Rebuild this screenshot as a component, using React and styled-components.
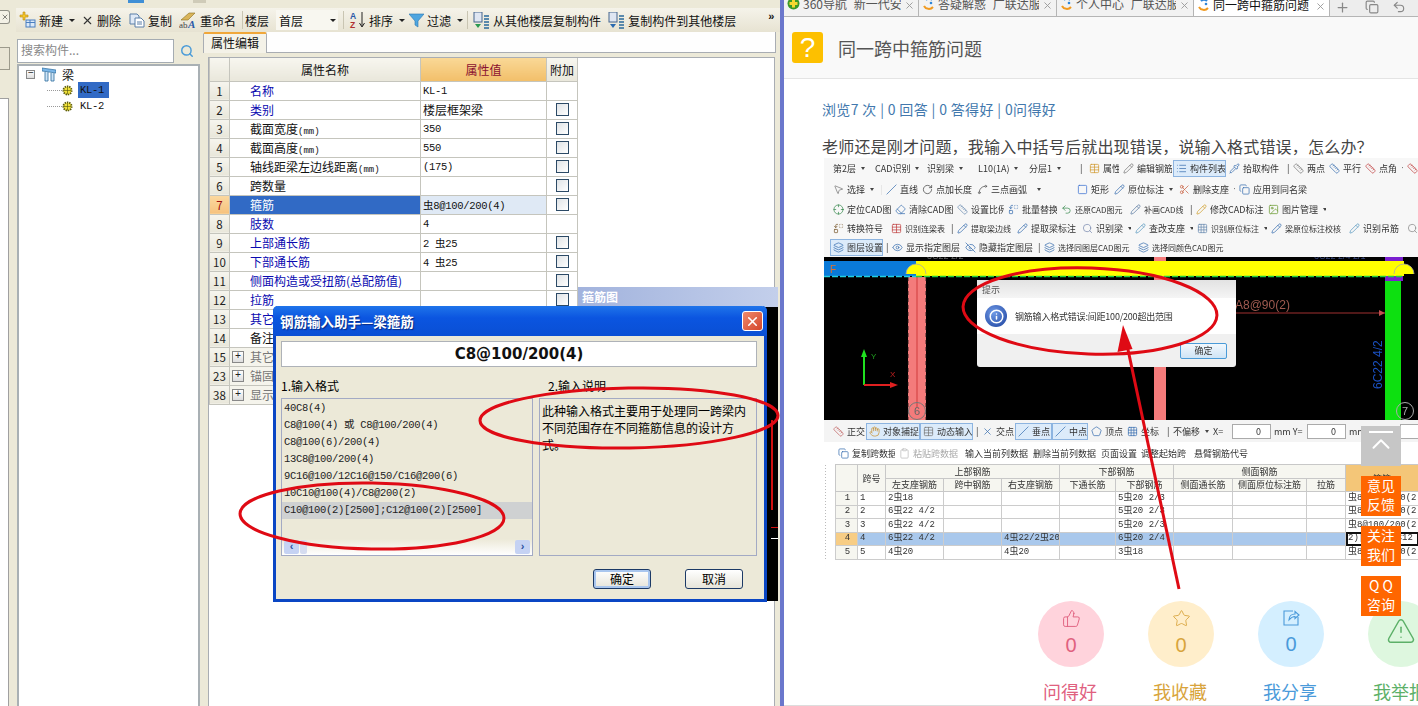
import styled, { createGlobalStyle } from 'styled-components';
import {
  ThumbsUp, Star, TriangleAlert, Search, X, Plus, Copy, Undo2, MousePointer2, Slash, RotateCw, Spline,
  Square, Pencil, Scissors, Layers, Eye, EyeOff, Table, List, Pipette, Image, Crosshair, Ruler,
  Grid3x3, Pentagon, Hand, Clipboard, Replace, Eraser, ChevronUp, Info,
} from 'lucide-react';

const Global = createGlobalStyle`
  html, body { margin: 0; padding: 0; background: #fff; }
  * { box-sizing: border-box; }
  body { font-family: "Noto Sans CJK SC", "Liberation Sans", sans-serif; }
`;

const mono = '"Liberation Mono", "Noto Sans CJK SC", monospace';
const cjk = '"Noto Sans CJK SC", "Liberation Sans", sans-serif';

const Page = styled.div`
  position: relative;
  display: flex;
  width: 1418px;
  height: 706px;
  overflow: hidden;
`;

/* left: desktop application */
const AppWindow = styled.div`
  display: flex;
  flex-direction: column;
  width: 780px;
  background: #ece9d8;
  font-size: 12px;
  color: #111;
`;

const AppTop = styled.div`
  height: 8px;
  flex: none;
  display: flex;
  align-items: flex-start;
`;

const TopBit = styled.span`
  width: ${(p) => p.$w}px;
  height: 3px;
  margin-left: ${(p) => p.$ml}px;
  background: ${(p) => p.$bg};
`;

const AppBody = styled.div`
  flex: 1;
  display: flex;
  min-height: 0;
`;

const Gutter = styled.div`
  width: 16px;
  flex: none;
  display: flex;
  flex-direction: column;
  align-items: flex-start;
`;

const GutterClose = styled.div`
  width: 10px;
  height: 14px;
  margin-top: 2px;
  border: 1px solid #8f8f86;
  border-left: 0;
  border-radius: 0 3px 3px 0;
  background: #f3f1e6;
  display: flex;
  align-items: center;
  justify-content: center;
`;

const GutterTab = styled.div`
  width: 10px;
  height: 23px;
  margin-top: 23px;
  border: 1px solid #9c9a8c;
  border-left: 0;
  background: #e9e5d5;
`;

const GutterPane = styled.div`
  width: 9px;
  flex: 1;
  margin-top: 28px;
  background: #fff;
  border-top: 1px solid #a0a0a0;
  border-right: 1px solid #a0a0a0;
`;

const AppMain = styled.div`
  flex: 1;
  display: flex;
  flex-direction: column;
  min-width: 0;
`;

const ToolStrip = styled.div`
  height: 24px;
  flex: none;
  display: flex;
  align-items: center;
  background: linear-gradient(#f5f3ea, #e7e3d2);
  position: relative;
`;

const StripItem = styled.div`
  display: flex;
  align-items: center;
  gap: 3px;
  margin-left: ${(p) => p.$ml || 0}px;
  white-space: nowrap;
`;

const Caret = styled.span`
  width: 0;
  height: 0;
  margin-left: 3px;
  border-left: 3px solid transparent;
  border-right: 3px solid transparent;
  border-top: 3px solid #222;
`;

const StripSep = styled.span`
  width: 1px;
  height: 18px;
  background: #c9c5b2;
  margin-left: ${(p) => p.$ml || 0}px;
`;

const FloorSelect = styled.div`
  width: 62px;
  height: 20px;
  margin-left: 7px;
  padding: 0 2px 0 3px;
  background: #f8f7f0;
  display: flex;
  align-items: center;
  justify-content: space-between;
`;

const More = styled.span`
  margin-left: 32px;
  font: 700 11px "Liberation Sans", sans-serif;
  transform: translateY(-4px);
`;

const Panes = styled.div`
  flex: 1;
  display: flex;
  min-height: 0;
`;

const TreeCol = styled.div`
  width: 184px;
  flex: none;
  padding: 7px 0 0 1px;
  display: flex;
  flex-direction: column;
`;

const SearchRow = styled.div`
  display: flex;
  height: 24px;
  flex: none;
`;

const SearchInput = styled.div`
  width: 157px;
  background: #fff;
  border: 1px solid #a5acb2;
  color: #888;
  padding-left: 3px;
  line-height: 20px;
`;

const SearchBtn = styled.div`
  flex: 1;
  display: flex;
  align-items: center;
  justify-content: center;
  color: #4a9bd8;
`;

const TreeBox = styled.div`
  flex: 1;
  margin-top: 1px;
  background: #fff;
  border: 2px solid #a9b0b4;
  border-bottom: 0;
  padding: 0 0 0 7px;
`;

const TreeRoot = styled.div`
  display: flex;
  align-items: center;
  height: 16px;
`;

const RootName = styled.span`
  margin-left: 6px;
`;

const Expander = styled.span`
  width: ${(p) => p.$size || 9}px;
  height: ${(p) => p.$size || 9}px;
  margin-right: ${(p) => p.$mr || 0}px;
  border: 1px solid #888;
  background: linear-gradient(#fff, #ddd);
  display: inline-flex;
  align-items: center;
  justify-content: center;
  font: 10px/1 "Liberation Mono", monospace;
  color: #222;
  flex: none;
`;

const TreeLeaf = styled.div`
  display: flex;
  align-items: center;
  height: 16px;
  margin-left: 21px;
`;

const LeafDots = styled.span`
  width: 15px;
  border-top: 1px dotted #999;
`;

const LeafName = styled.span`
  margin-left: 5px;
  height: 16px;
  width: 31px;
  padding-left: 2px;
  font: 10.5px/16px ${mono};
  letter-spacing: -0.3px;
  background: ${(p) => (p.$on ? '#316ac5' : 'transparent')};
  color: #111;
`;

const PropPanel = styled.div`
  flex: 1;
  margin-left: 3px;
  min-width: 0;
  display: flex;
  flex-direction: column;
  margin-right: 4px;
`;

const TabBar = styled.div`
  height: 21px;
  flex: none;
  background: #fefefe;
  border-bottom: 1px solid #a9adb3;
  border-right: 1px solid #a9adb3;
`;

const PropTab = styled.div`
  width: 64px;
  height: 21px;
  background: #f4f2e8;
  border: 1px solid #a9adb3;
  border-top: 2px solid #f0a73a;
  border-bottom: 0;
  border-radius: 2px 2px 0 0;
  text-align: center;
  line-height: 18px;
`;

const TableBox = styled.div`
  flex: 1;
  margin: 4px 1px 0 5px;
  background: #fff;
  border: 1px solid #a9adb3;
  border-bottom: 0;
`;

const PropTable = styled.table`
  border-collapse: collapse;
  table-layout: fixed;
  width: 368px;
`;

const HeadCell = styled.th`
  height: 23px;
  padding: 0;
  font-weight: 400;
  border: 1px solid #c5c5bd;
  border-top: 0;
  background: ${(p) => (p.$hot ? 'linear-gradient(#f9d896, #f2bf6a)' : 'linear-gradient(#f7f6ef, #e9e7db)')};
  color: ${(p) => (p.$hot ? '#8a1030' : '#111')};
`;

const Num = styled.td`
  height: 19px;
  padding: 0;
  text-align: center;
  font: 11.5px ${cjk};
  border: 1px solid #c5c5bd;
  background: ${(p) => (p.$on ? 'linear-gradient(#fbd8a0, #f6c27e)' : 'linear-gradient(#f6f5ee, #e8e6da)')};
  color: ${(p) => (p.$on ? '#a01010' : '#222')};
`;

const Name = styled.td`
  padding: 0 0 0 20px;
  white-space: nowrap;
  overflow: hidden;
  border: 1px solid #c5c5bd;
  background: ${(p) => (p.$on ? '#316ac5' : p.$group ? '#f5f4ec' : '#fff')};
  color: ${(p) => (p.$on ? '#fff' : p.$tone === 'blue' ? '#0a0ab0' : p.$tone === 'gray' ? '#777' : '#111')};
`;

const Unit = styled.span`
  font: 9px ${mono};
`;

const GroupName = styled.div`
  display: flex;
  align-items: center;
  margin-left: -18px;
`;

const Val = styled.td`
  padding: 0 0 0 2px;
  font: 10.5px ${mono};
  letter-spacing: -0.3px;
  white-space: pre;
  border: 1px solid #c5c5bd;
  background: ${(p) => (p.$on ? '#dfe9f5' : '#fff')};
`;

const ValCjk = styled.span`
  font: 12px ${cjk};
  letter-spacing: 0;
`;

const Extra = styled.td`
  padding: 0;
  text-align: center;
  border: 1px solid #c5c5bd;
`;

const Check = styled.span`
  display: inline-block;
  width: 13px;
  height: 13px;
  margin-top: 2px;
  border: 1px solid #2c4a66;
  background: linear-gradient(135deg, #dfe3e6, #fff);
`;

const AppEdge = styled.div`
  width: 4px;
  flex: none;
  background: #6b77cc;
`;

/* floating windows on top of the application */
const RebarWindow = styled.div`
  position: absolute;
  left: 578px;
  top: 287px;
  width: 200px;
  height: 314px;
  background: #000;
  overflow: hidden;
`;

const RebarTitle = styled.div`
  height: 20px;
  padding-left: 4px;
  background: linear-gradient(90deg, #a2b3dd, #c3cfeb);
  color: #fff;
  font-size: 12px;
  font-weight: 700;
  line-height: 20px;
`;

const RebarRed = styled.div`
  position: absolute;
  left: 193px;
  top: 133px;
  width: 2px;
  height: 90px;
  background: #d01010;
`;

const RebarLine = styled.div`
  position: absolute;
  left: 193px;
  top: ${(p) => p.$top}px;
  width: 7px;
  height: 1px;
  background: ${(p) => p.$color};
`;

const Dialog = styled.div`
  position: absolute;
  left: 273px;
  top: 306px;
  width: 494px;
  height: 296px;
  display: flex;
  flex-direction: column;
  background: #ece9d8;
  border: 3px solid #0a46c4;
  border-top: 0;
  border-radius: 5px 5px 0 0;
  font-size: 12px;
`;

const DialogTitle = styled.div`
  height: 30px;
  margin: 0 -3px;
  flex: none;
  padding: 0 4px 0 7px;
  display: flex;
  align-items: center;
  justify-content: space-between;
  border-radius: 5px 5px 0 0;
  background: linear-gradient(#1f74ea, #0b55e0 40%, #0a4fd4);
  color: #fff;
  font-size: 13.5px;
  font-weight: 700;
  text-shadow: 1px 1px 1px #0a2a80;
`;

const CloseBtn = styled.div`
  width: 21px;
  height: 20px;
  border: 1px solid #fff;
  border-radius: 3px;
  background: linear-gradient(135deg, #ee8a6c, #d4452a);
  display: flex;
  align-items: center;
  justify-content: center;
  color: #fff;
`;

const Formula = styled.div`
  height: 26px;
  margin: 5px 7px 0 5px;
  flex: none;
  background: #fff;
  border: 1px solid #aeb2b8;
  text-align: center;
  font: 700 15px/24px "DejaVu Sans", sans-serif;
  color: #111;
`;

const ColLabels = styled.div`
  display: flex;
  margin: 11px 0 0 5px;
  height: 20px;
  flex: none;
  line-height: 16px;
`;

const ColLabel = styled.div`
  width: ${(p) => p.$w}px;
`;

const DialogCols = styled.div`
  display: flex;
  gap: 6px;
  height: 158px;
  flex: none;
  margin-left: 5px;
`;

const FormatList = styled.div`
  width: 252px;
  position: relative;
  border: 1px solid #a3aac4;
  padding-top: 1px;
`;

const FormatItem = styled.div`
  height: 17px;
  padding-left: 2px;
  font: 10.5px/17px ${mono};
  letter-spacing: -0.3px;
  color: #222;
  white-space: nowrap;
  background: ${(p) => (p.$on ? '#cfd1d2' : 'transparent')};
`;

const HScroll = styled.div`
  position: absolute;
  left: 0;
  right: 0;
  bottom: 0;
  height: 16px;
  display: flex;
  align-items: center;
  gap: 1px;
  padding: 0 2px;
  background: linear-gradient(#ece9d8, #fff);
`;

const ScrollBtn = styled.div`
  width: 15px;
  height: 14px;
  border-radius: 2px;
  background: #c5d2f3;
  color: #2a4fa0;
  font: 700 11px/13px "Liberation Sans", sans-serif;
  text-align: center;
`;

const ScrollThumb = styled.div`
  width: 7px;
  height: 14px;
  margin-right: auto;
  border-radius: 2px;
  background: #d5dcf0;
`;

const HelpBox = styled.div`
  width: 218px;
  border: 1px solid #a3aac4;
  padding: 3px 0 0 2px;
  line-height: 17px;
`;

const HelpText = styled.div`
  width: 206px;
`;

const DialogBtns = styled.div`
  display: flex;
  justify-content: flex-end;
  gap: 34px;
  margin: 13px 21px 0 0;
`;

const DialogBtn = styled.div`
  width: 58px;
  height: 20px;
  background: linear-gradient(#fff, #e6e4d9);
  border: 1px solid #1c3a66;
  box-shadow: ${(p) => (p.$primary ? 'inset 0 0 0 2px #a9c6ee' : 'none')};
  border-radius: 3px;
  text-align: center;
  line-height: 18px;
`;

const Scribble = styled.svg`
  position: absolute;
  left: 0;
  top: 0;
  pointer-events: none;
`;

/* right: browser */
const Browser = styled.div`
  flex: 1;
  min-width: 0;
  display: flex;
  flex-direction: column;
  background: #fff;
  border-bottom: 1px solid #ddd;
`;

const TabRow = styled.div`
  height: 17px;
  flex: none;
  display: flex;
  align-items: flex-end;
  overflow: hidden;
  background: #ededed;
  border-bottom: 1px solid #b5b5b5;
  padding-right: 8px;
`;

const BrowserTab = styled.div`
  width: ${(p) => p.$w}px;
  height: 17px;
  flex: none;
  padding: 0 3px 6px 3px;
  display: flex;
  align-items: flex-end;
  gap: 3px;
  font-size: 12px;
  line-height: 12px;
  white-space: nowrap;
  overflow: hidden;
  color: ${(p) => (p.$on ? '#111' : '#555')};
  background: ${(p) => (p.$on ? '#fff' : '#f2f2f2')};
  border-right: 1px solid #b5b5b5;
  ${(p) => (p.$on ? 'margin-bottom: -1px;' : '')}
`;

const TabText = styled.span`
  flex: 1;
  overflow: hidden;
`;

const TabClose = styled(X)`
  color: #999;
  flex: none;
  margin-bottom: -1px;
`;

const TabAction = styled.div`
  width: ${(p) => p.$w}px;
  flex: none;
  height: 16px;
  display: flex;
  align-items: flex-start;
  justify-content: center;
  color: #888;
  overflow: hidden;
`;

const QuestionHead = styled.div`
  height: 62px;
  flex: none;
  padding-left: 8px;
  display: flex;
  align-items: center;
  gap: 15px;
  background: #f9f9f9;
  border-bottom: 1px solid #e4e4e4;
`;

const QuestionMark = styled.div`
  width: 31px;
  height: 31px;
  border-radius: 3px;
  background: #fdc000;
  color: #fff;
  font: 28px/31px "Liberation Sans", sans-serif;
  text-align: center;
`;

const QuestionTitle = styled.div`
  font-size: 18px;
  color: #555;
`;

const Stats = styled.div`
  margin: 19px 0 0 38px;
  height: 22px;
  font-size: 14px;
  line-height: 22px;
  letter-spacing: 0.35px;
  color: #4278ad;
  white-space: nowrap;
`;

const Question = styled.div`
  margin: 15px 0 0 38px;
  height: 23px;
  font-size: 16px;
  line-height: 23px;
  letter-spacing: 0.2px;
  color: #444;
  white-space: nowrap;
`;

const Shot = styled.div`
  margin: 0 0 0 40px;
  width: 594px;
  height: 404px;
  flex: none;
  overflow: hidden;
  filter: blur(0.3px);
  font-size: 9px;
  color: #333;
  background: #fff;
`;

const ShotBar = styled.div`
  height: ${(p) => p.$h}px;
  display: flex;
  align-items: center;
  padding-left: ${(p) => p.$pl || 0}px;
  white-space: nowrap;
  background: ${(p) => p.$bg || '#f7f7f7'};
`;

const Tool = styled.div`
  width: ${(p) => p.$w}px;
  height: 17px;
  flex: none;
  display: flex;
  align-items: center;
  gap: 3px;
  padding-left: 2px;
  overflow: hidden;
  font-size: ${(p) => p.$fs || 9}px;
  border: 1px solid ${(p) => (p.$on ? '#8db4e0' : 'transparent')};
  background: ${(p) => (p.$on ? '#dcebfa' : 'transparent')};
  color: ${(p) => (p.$dim ? '#aaa' : '#333')};
`;

const ToolIcon = styled.span`
  display: inline-flex;
  color: ${(p) => p.$color || '#3a6fb0'};
  flex: none;
`;

const ToolCaret = styled.span`
  width: 0;
  height: 0;
  margin-left: 2px;
  border-left: 2px solid transparent;
  border-right: 2px solid transparent;
  border-top: 3px solid #444;
`;

const NumField = styled.div`
  width: 39px;
  height: 15px;
  flex: none;
  border: 1px solid #aaa;
  background: #fff;
  text-align: right;
  padding-right: 9px;
  line-height: 13px;
`;

const Canvas = styled.div`
  position: relative;
  height: 163px;
  background: #000;
  overflow: hidden;
`;

const CanvasArt = styled.svg`
  position: absolute;
  left: 0;
  top: 0;
`;

const Alert = styled.div`
  position: absolute;
  left: 153px;
  top: 23px;
  width: 259px;
  height: 87px;
  border-radius: 3px;
  background: #f0f0f0;
  display: flex;
  flex-direction: column;
`;

const AlertHead = styled.div`
  height: 18px;
  padding-left: 5px;
  background: linear-gradient(#e2e2e2, #f5f5f5);
  color: #555;
  line-height: 20px;
`;

const AlertBody = styled.div`
  height: 36px;
  background: #fff;
  display: flex;
  align-items: center;
  gap: 8px;
  padding-left: 8px;
  letter-spacing: -0.2px;
  color: #333;
`;

const AlertIcon = styled.div`
  width: 22px;
  height: 22px;
  border-radius: 50%;
  background: radial-gradient(circle at 40% 35%, #6f9ae6, #1a3f9c);
  color: #fff;
  display: flex;
  align-items: center;
  justify-content: center;
`;

const AlertFoot = styled.div`
  flex: 1;
  display: flex;
  justify-content: flex-end;
  padding: 9px 9px 0 0;
`;

const AlertBtn = styled.div`
  width: 47px;
  height: 16px;
  border: 1px solid #4a9bd8;
  border-radius: 2px;
  background: linear-gradient(#f2f8fd, #cfe4f6);
  text-align: center;
  line-height: 14px;
`;

const GridWrap = styled.div`
  padding-left: 11px;
  background-image: radial-gradient(#bbb 0.5px, transparent 0.6px);
  background-size: 3px 3px;
  background-repeat: repeat-y;
  background-color: #fff;
`;

const BeamGrid = styled.table`
  border-collapse: collapse;
  table-layout: fixed;
  width: 583px;
  background: #fff;
`;

const GridHead = styled.th`
  height: 13.5px;
  padding: 0;
  font-weight: 400;
  border: 1px solid #c8c8c8;
  background: ${(p) => (p.$hot ? '#f4c678' : '#f6f6f0')};
  line-height: 11px;
`;

const GridCell = styled.td`
  height: 13.5px;
  padding: 0 0 0 2px;
  font: 9px/11px ${mono};
  white-space: nowrap;
  overflow: hidden;
  text-align: ${(p) => (p.$num ? 'center' : 'left')};
  border: 1px solid #ccc;
  background: ${(p) => (p.$num && p.$on ? '#f7cd85' : p.$on ? '#a9c8ec' : p.$num ? '#f6f6f0' : '#fff')};
  ${(p) => (p.$edit ? 'outline: 2px solid #111; outline-offset: -2px; background: #fff;' : '')}
`;

const Reactions = styled.div`
  margin: 39px 0 0 232px;
  display: flex;
  width: 440px;
  flex: none;
`;

const Reaction = styled.div`
  width: 110px;
  flex: none;
  padding-left: 22px;
  display: flex;
  flex-direction: column;
  align-items: flex-start;
  color: ${(p) => p.$color};
`;

const Bubble = styled.div`
  width: 66px;
  height: 66px;
  border-radius: 50%;
  background: ${(p) => p.$bg};
  display: flex;
  flex-direction: column;
  align-items: center;
  padding-top: ${(p) => p.$pt || 8}px;
`;

const BubbleCount = styled.div`
  font: 20px/24px "Liberation Sans", sans-serif;
  margin-top: 5px;
`;

const ReactionLabel = styled.div`
  font-size: 18px;
  line-height: 24px;
  margin: 12px 0 0 5px;
  white-space: nowrap;
`;

const SideDock = styled.div`
  position: absolute;
  left: 1361px;
  top: 426px;
  width: 40px;
  display: flex;
  flex-direction: column;
  gap: 10px;
`;

const DockBtn = styled.div`
  width: 40px;
  height: 40px;
  background: ${(p) => (p.$gray ? '#c6c6c6' : '#ff6600')};
  color: #fff;
  font-size: 14px;
  line-height: 19px;
  text-align: center;
  padding-bottom: 3px;
  display: flex;
  flex-direction: column;
  align-items: center;
  justify-content: center;
`;

const DockChevron = styled(ChevronUp)`
  margin-top: -4px;
`;

const DockBar = styled.div`
  width: 24px;
  height: 2px;
  background: #fff;
`;

/* small drawn icons */
const IconNew = () => (
  <svg width="18" height="18" viewBox="0 0 18 18">
    <path d="M2 4h3V1h2v3h3v2H7v3H5V6H2z" fill="#f2c52c" stroke="#b8860b" strokeWidth=".6" />
    <rect x="8" y="9" width="9" height="7" fill="#dbe9f8" stroke="#4a7fc0" />
    <path d="M8 11.5h9M12 9v7" stroke="#4a7fc0" />
  </svg>
);

const IconCopy = () => (
  <svg width="16" height="16" viewBox="0 0 16 16">
    <path d="M1 2h7l2 2v8H1z" fill="#dfe9f6" stroke="#5b7fa8" />
    <path d="M6 6h6l3 3v6H6z" fill="#fff" stroke="#5b7fa8" />
    <path d="M8 10h5M8 12h5" stroke="#5b7fa8" />
  </svg>
);

const IconRename = () => (
  <svg width="18" height="18" viewBox="0 0 18 18">
    <path d="M2 9l8-7h6l-7 7z" fill="#d9b45a" stroke="#8a7020" strokeWidth=".6" />
    <text x="0" y="17" fontSize="9" fontFamily="Liberation Serif" fill="#444">ab</text>
    <text x="9" y="17" fontSize="11" fontFamily="Liberation Serif" fontWeight="700" fontStyle="italic" fill="#2a5aa8">A</text>
  </svg>
);

const IconSort = () => (
  <svg width="17" height="18" viewBox="0 0 17 18">
    <text x="1" y="8" fontSize="8.5" fontFamily="Liberation Sans" fontWeight="700" fill="#2a5aa8">A</text>
    <text x="1" y="17" fontSize="8.5" fontFamily="Liberation Sans" fontWeight="700" fill="#b03030">Z</text>
    <path d="M13 1v14M10.5 12l2.5 4 2.5-4" stroke="#222" fill="none" />
  </svg>
);

const IconFilter = () => (
  <svg width="15" height="15" viewBox="0 0 15 15">
    <path d="M0 1h15L9 8v6l-3-2V8z" fill="#4fa6e0" stroke="#2a76b0" strokeWidth=".6" />
  </svg>
);

const IconFloorCopy = ({ tint }) => (
  <svg width="17" height="17" viewBox="0 0 17 17">
    <rect x="1" y="0" width="8" height="10" fill="#dfe6f2" stroke="#44648c" />
    <path d="M2 12h6l-3 4z" fill={tint} />
    <path d="M11 4h5M11 7h5M11 10h5M11 13h5M11 16h5" stroke="#2a6a9c" strokeWidth="1.6" />
  </svg>
);

const IconBeams = () => (
  <svg width="14" height="15" viewBox="0 0 14 15">
    <path d="M0 1l14 2v3L0 4z" fill="#7cb7e8" stroke="#2a6a9c" strokeWidth=".7" />
    <path d="M3 5v9h3V5M9 6v8h3V6" fill="#cfe4f6" stroke="#2a6a9c" strokeWidth=".8" />
  </svg>
);

const IconGear = () => (
  <svg width="11" height="11" viewBox="0 0 12 12">
    <circle cx="6" cy="6" r="4.5" fill="#f2e23a" stroke="#5a5a10" strokeDasharray="1.5 1" strokeWidth="2" />
    <path d="M2 6h8M6 2v8" stroke="#5a5a10" strokeWidth=".7" />
  </svg>
);

const Fav = () => (
  <svg width="13" height="13" viewBox="0 0 13 13">
    <path d="M2 9a5.5 5.5 0 0 0 9 1" stroke="#f09a20" strokeWidth="2" fill="none" />
    <path d="M4 3a4 4 0 0 1 6 0" stroke="#2f86d8" strokeWidth="2" fill="none" />
    <circle cx="9" cy="6" r="1.3" fill="#2f86d8" />
  </svg>
);

const Fav360 = () => (
  <svg width="13" height="13" viewBox="0 0 13 13">
    <circle cx="6.5" cy="6.5" r="6" fill="#3a9a28" />
    <path d="M5 2.5h3v2.5h2.5v3H8v2.5H5V8H2.5V5H5z" fill="#f5d830" />
  </svg>
);

const IconShare = () => (
  <svg width="18" height="18" viewBox="0 0 18 18" fill="none" stroke="currentColor" strokeWidth="1.1">
    <path d="M11 2H2v14h14V8" />
    <path d="M7 11c0-4 3-6 6-6V2.5L17 6l-4 3.5V7.5c-2 0-4 1-6 3.5z" />
  </svg>
);

const rebar = '虫';

const propRows = [
  { n: 1, name: '名称', tone: 'blue', val: 'KL-1', noCheck: true },
  { n: 2, name: '类别', tone: 'blue', cjk: '楼层框架梁' },
  { n: 3, name: '截面宽度', unit: '(mm)', val: '350' },
  { n: 4, name: '截面高度', unit: '(mm)', val: '550' },
  { n: 5, name: '轴线距梁左边线距离', unit: '(mm)', val: '(175)' },
  { n: 6, name: '跨数量' },
  { n: 7, name: '箍筋', tone: 'blue', val: `${rebar}8@100/200(4)`, on: true },
  { n: 8, name: '肢数', tone: 'blue', val: '4', noCheck: true },
  { n: 9, name: '上部通长筋', tone: 'blue', val: `2 ${rebar}25` },
  { n: 10, name: '下部通长筋', tone: 'blue', val: `4 ${rebar}25` },
  { n: 11, name: '侧面构造或受扭筋(总配筋值)', tone: 'blue' },
  { n: 12, name: '拉筋', tone: 'blue' },
  { n: 13, name: '其它箍筋', tone: 'blue' },
  { n: 14, name: '备注' },
  { n: 15, name: '其它属性', group: true },
  { n: 23, name: '锚固搭接', group: true },
  { n: 38, name: '显示样式', group: true },
];

const formats = [
  '40C8(4)',
  'C8@100(4) 或 C8@100/200(4)',
  'C8@100(6)/200(4)',
  '13C8@100/200(4)',
  '9C16@100/12C16@150/C16@200(6)',
  '10C10@100(4)/C8@200(2)',
  'C10@100(2)[2500];C12@100(2)[2500]',
];

const tools1 = [
  { t: '第2层', w: 42, c: 1 }, { t: 'CAD识别', w: 52, c: 1 }, { t: '识别梁', w: 51, c: 1 }, { t: 'L10(1A)', w: 51, c: 1 },
  { t: '分层1', w: 51, c: 1 }, { sep: 1, w: 9 },
  { t: '属性', w: 34, i: Table, col: '#d09a30' }, { t: '编辑钢筋', w: 53, i: Pencil, col: '#777' },
  { t: '构件列表', w: 53, i: List, on: 1 }, { t: '拾取构件', w: 58, i: Pipette }, { sep: 1, w: 6 },
  { t: '两点', w: 36, i: Ruler, col: '#777' }, { t: '平行', w: 36, i: Ruler }, { t: '点角', w: 42, i: Ruler, col: '#c04040', c: 1 },
  { i: Ruler, w: 16, col: '#c04040' },
];
const tools2 = [
  { t: '选择', w: 48, i: MousePointer2, col: '#777', c: 1 }, { sep: 1, w: 5 }, { t: '直线', w: 36, i: Slash },
  { t: '点加长度', w: 55, i: RotateCw, col: '#444' }, { t: '三点画弧', w: 58, i: Spline, col: '#555', c: 1 },
  { t: '', w: 42, c: 1 }, { t: '矩形', w: 37, i: Square, col: '#3a6fd0' }, { t: '原位标注', w: 65, i: Pencil, c: 1 },
  { t: '删除支座', w: 60, i: Scissors, col: '#c86040', c: 1 }, { t: '应用到同名梁', w: 72, i: Copy },
];
const tools3 = [
  { t: '定位CAD图', w: 62, i: Crosshair, col: '#3a8a50' }, { t: '清除CAD图', w: 62, i: Eraser },
  { t: '设置比例', w: 51, i: Ruler, col: '#6a8ab0' }, { t: '批量替换', w: 53, i: Replace }, { t: '还原CAD图元', w: 69, i: Undo2, col: '#3a8a50', fs: 8 },
  { t: '补画CAD线', w: 60, i: Pencil, col: '#5a7aa0', fs: 8 }, { sep: 1, w: 6 }, { t: '修改CAD标注', w: 72, i: Pencil, col: '#d0a030' },
  { t: '图片管理', w: 62, i: Image, col: '#6a9a30', c: 1 },
];
const tools4 = [
  { t: '转换符号', w: 58, i: Replace, col: '#7a5a30' }, { t: '识别连梁表', w: 60, i: Table, col: '#c04040', fs: 8 }, { sep: 1, w: 6 },
  { t: '提取梁边线', w: 60, i: Pencil, fs: 8 }, { t: '提取梁标注', w: 65, i: Pencil, c: 1 }, { t: '识别梁', w: 53, i: Search, col: '#7a8ab0', c: 1 },
  { t: '查改支座', w: 62, i: Pencil, col: '#5a9ac0', c: 1 }, { t: '识别原位标注', w: 74, i: Grid3x3, col: '#6a8ab0', c: 1, fs: 8 },
  { t: '梁原位标注校核', w: 78, i: Pencil, fs: 8 }, { t: '识别吊筋', w: 58, i: Pencil, col: '#5a9ac0', c: 1 }, { i: Search, w: 16, col: '#888' },
];
const tools5 = [
  { t: '图层设置', w: 53, i: Layers, on: 1 }, { sep: 1, w: 6 }, { t: '显示指定图层', w: 73, i: Eye },
  { t: '隐藏指定图层', w: 73, i: EyeOff }, { sep: 1, w: 6 },
  { t: '选择同图层CAD图元', w: 94, i: Layers, fs: 8 }, { t: '选择同颜色CAD图元', w: 94, i: Layers, fs: 8 },
];
const snapTools = [
  { t: '正交', w: 36, i: Ruler, col: '#c06060' }, { t: '对象捕捉', w: 54, i: Hand, col: '#c89030', on: 1 }, { t: '动态输入', w: 53, i: Table, col: '#777', on: 1 },
  { sep: 1, w: 6 }, { t: '交点', w: 36, i: X }, { t: '垂点', w: 37, i: Slash, on: 1 }, { t: '中点', w: 36, i: Slash, on: 1 },
  { t: '顶点', w: 36, i: Pentagon }, { t: '坐标', w: 40, i: Grid3x3 },
];
const gridTools = [
  { t: '复制跨数据', w: 61, i: Copy }, { t: '粘贴跨数据', w: 66, i: Clipboard, col: '#bbb', dim: 1 }, { t: '输入当前列数据', w: 68 },
  { t: '删除当前列数据', w: 68 }, { t: '页面设置', w: 40 }, { t: '调整起始跨', w: 53 }, { t: '悬臂钢筋代号', w: 70 },
];

const beamCols = [22, 28, 58, 58, 58, 56, 58, 59, 74, 39, 73];
const beamRows = [
  [1, 1, `2${rebar}18`, '', '', '', `5${rebar}20 2/3`, '', '', '', `${rebar}8@100/200(2)`],
  [2, 2, `6${rebar}22 4/2`, '', '', '', `5${rebar}20 2/3`, '', '', '', `${rebar}8@100/200(2)`],
  [3, 3, `6${rebar}22 4/2`, '', '', '', `5${rebar}20 2/3`, '', '', '', `${rebar}8@100/200(2)`],
  [4, 4, `6${rebar}22 4/2`, '', `4${rebar}22/2${rebar}20`, '', `6${rebar}20 2/4`, '', '', '', '2)[2500];C12'],
  [5, 5, `4${rebar}20`, '', `4${rebar}20`, '', `3${rebar}18`, '', '', '', `${rebar}8@100/200(2)`],
];

const ToolRow = ({ items, h, pl, bg, children }) => (
  <ShotBar $h={h} $pl={pl} $bg={bg}>
    {items.map((it, i) =>
      it.sep ? (
        <Tool key={i} $w={it.w}>|</Tool>
      ) : (
        <Tool key={i} $w={it.w} $on={it.on} $dim={it.dim} $fs={it.fs}>
          {it.i && (
            <ToolIcon $color={it.col}>
              <it.i size={11} strokeWidth={1.6} />
            </ToolIcon>
          )}
          {it.t}
          {it.c && <ToolCaret />}
        </Tool>
      ),
    )}
    {children}
  </ShotBar>
);

const App = () => (
  <Page>
    <Global />
    <AppWindow>
      <AppTop>
        <TopBit $ml={128} $w={16} $bg="#3f8fd6" />
        <TopBit $ml={49} $w={13} $bg="#cfcbb8" />
      </AppTop>
      <AppBody>
        <Gutter>
          <GutterClose><X size={8} strokeWidth={1.5} /></GutterClose>
          <GutterTab />
          <GutterPane />
        </Gutter>
        <AppMain>
          <ToolStrip>
            <StripItem $ml={2}><IconNew />新建<Caret /></StripItem>
            <StripItem $ml={6}><X size={13} strokeWidth={2} color="#333" />删除</StripItem>
            <StripItem $ml={8}><IconCopy />复制</StripItem>
            <StripItem $ml={7}><IconRename />重命名</StripItem>
            <StripSep $ml={6} />
            <StripItem $ml={2}>楼层</StripItem>
            <FloorSelect>首层<Caret /></FloorSelect>
            <StripSep $ml={5} />
            <StripItem $ml={5}><IconSort />排序<Caret /></StripItem>
            <StripItem $ml={4}><IconFilter />过滤<Caret /></StripItem>
            <StripSep $ml={4} />
            <StripItem $ml={5}><IconFloorCopy tint="#2a9a50" />从其他楼层复制构件</StripItem>
            <StripItem $ml={7}><IconFloorCopy tint="#2a6ab0" />复制构件到其他楼层</StripItem>
            <More>»</More>
          </ToolStrip>
          <Panes>
            <TreeCol>
              <SearchRow>
                <SearchInput>搜索构件...</SearchInput>
                <SearchBtn><Search size={14} strokeWidth={2.5} /></SearchBtn>
              </SearchRow>
              <TreeBox>
                <TreeRoot>
                  <Expander $mr={7}>−</Expander>
                  <IconBeams />
                  <RootName>梁</RootName>
                </TreeRoot>
                <TreeLeaf><LeafDots /><IconGear /><LeafName $on>KL-1</LeafName></TreeLeaf>
                <TreeLeaf><LeafDots /><IconGear /><LeafName>KL-2</LeafName></TreeLeaf>
              </TreeBox>
            </TreeCol>
            <PropPanel>
              <TabBar><PropTab>属性编辑</PropTab></TabBar>
              <TableBox>
                <PropTable>
                  <colgroup>
                    <col width="20" /><col width="191" /><col width="126" /><col width="31" />
                  </colgroup>
                  <thead>
                    <tr>
                      <HeadCell />
                      <HeadCell>属性名称</HeadCell>
                      <HeadCell $hot>属性值</HeadCell>
                      <HeadCell>附加</HeadCell>
                    </tr>
                  </thead>
                  <tbody>
                    {propRows.map((r) =>
                      r.group ? (
                        <tr key={r.n}>
                          <Num>{r.n}</Num>
                          <Name $group $tone="gray" colSpan={3}>
                            <GroupName><Expander $size={12} $mr={6}>+</Expander>{r.name}</GroupName>
                          </Name>
                        </tr>
                      ) : (
                        <tr key={r.n}>
                          <Num $on={r.on}>{r.n}</Num>
                          <Name $on={r.on} $tone={r.tone}>{r.name}{r.unit && <Unit>{r.unit}</Unit>}</Name>
                          <Val $on={r.on}>{r.cjk ? <ValCjk>{r.cjk}</ValCjk> : r.val}</Val>
                          <Extra>{!r.noCheck && <Check />}</Extra>
                        </tr>
                      ),
                    )}
                  </tbody>
                </PropTable>
              </TableBox>
            </PropPanel>
          </Panes>
        </AppMain>
      </AppBody>
    </AppWindow>
    <AppEdge />

    <Browser>
      <TabRow>
        <BrowserTab $w={135}><Fav360 /><TabText>360导航_新一代安全上网</TabText><TabClose size={11} /></BrowserTab>
        <BrowserTab $w={138}><Fav /><TabText>答疑解惑_广联达服务</TabText><TabClose size={11} /></BrowserTab>
        <BrowserTab $w={137}><Fav /><TabText>个人中心_广联达服务</TabText><TabClose size={11} /></BrowserTab>
        <BrowserTab $w={136} $on><Fav /><TabText>同一跨中箍筋问题</TabText><TabClose size={11} /></BrowserTab>
        <TabAction $w={25}><Plus size={15} /></TabAction>
        <TabAction $w={34}><Copy size={14} /></TabAction>
        <TabAction $w={20}><Undo2 size={14} /></TabAction>
      </TabRow>
      <QuestionHead>
        <QuestionMark>?</QuestionMark>
        <QuestionTitle>同一跨中箍筋问题</QuestionTitle>
      </QuestionHead>
      <Stats>浏览7 次 | 0 回答 | 0 答得好 | 0问得好</Stats>
      <Question>老师还是刚才问题，我输入中括号后就出现错误，说输入格式错误，怎么办？</Question>
      <Shot>
        <ToolRow items={tools1} h={21} pl={6} />
        <ToolRow items={tools2} h={20} pl={6} />
        <ToolRow items={tools3} h={20} pl={6} />
        <ToolRow items={tools4} h={19} pl={6} />
        <ToolRow items={tools5} h={19} pl={6} />
        <Canvas>
          <CanvasArt width="594" height="163" viewBox="0 0 594 163">
            <rect x="84" y="20" width="18" height="143" fill="#f47b7b" />
            <path d="M93 20v130" stroke="#c02020" strokeWidth=".7" />
            <path d="M84 20v143M102 20v143" stroke="#111" strokeDasharray="4 3" strokeWidth=".8" />
            <rect x="330" y="0" width="12" height="163" fill="#f47b7b" />
            <rect x="561" y="20" width="16" height="143" fill="#0de010" />
            <rect x="561" y="0" width="18" height="24" fill="#7a1fd0" />
            <rect x="0" y="4" width="92" height="15" fill="#0a7ad8" />
            <rect x="92" y="4" width="488" height="15" fill="#ffff00" />
            <path d="M0 19.5h92" stroke="#22d0e0" strokeDasharray="6 2" strokeWidth="1.4" />
            <path d="M92 19.5h488" stroke="#20d040" strokeDasharray="6 2" strokeWidth="1.4" />
            <path d="M82 17a10 10 0 0 1 20 0" fill="#ffff00" stroke="#aaa" strokeWidth=".8" />
            <path d="M570 17a10 10 0 0 1 20 0" fill="#ffff00" stroke="#aaa" strokeWidth=".8" />
            <text x="6" y="16" fontSize="10" fill="#e07030" fontFamily="Liberation Sans">F</text>
            <text x="103" y="2" fontSize="9" fill="#666" fontFamily="Liberation Sans">3C22 2/2</text>
            <text x="490" y="2" fontSize="9" fill="#3a4a80" fontFamily="Liberation Sans">6C22 2/4 2/1</text>
            <text x="411" y="52" fontSize="12" fill="#a05a50" fontFamily="Liberation Sans">A8@90(2)</text>
            <path d="M412 56h149" stroke="#a03030" />
            <path d="M561 56l-6-3v6z" fill="#c05050" />
            <text transform="translate(558 132) rotate(-90)" fontSize="12" fill="#1a50c0" fontFamily="Liberation Sans">6C22 4/2</text>
            <circle cx="93" cy="154" r="8.5" fill="none" stroke="#777" />
            <text x="90" y="158" fontSize="11" fill="#666" fontFamily="Liberation Sans">6</text>
            <circle cx="581" cy="154" r="8.5" fill="none" stroke="#aaa" />
            <text x="578" y="158" fontSize="11" fill="#aaa" fontFamily="Liberation Sans">7</text>
            <path d="M40 128V96" stroke="#20e020" strokeWidth="2" />
            <path d="M40 92l-3 8h6z" fill="#20e020" />
            <path d="M40 128h30" stroke="#e02020" strokeWidth="2" />
            <path d="M74 128l-8-3v6z" fill="#e02020" />
            <text x="47" y="102" fontSize="8" fill="#20a020" fontFamily="Liberation Sans">Y</text>
            <text x="66" y="120" fontSize="8" fill="#c02020" fontFamily="Liberation Sans">X</text>
          </CanvasArt>
          <Alert>
            <AlertHead>提示</AlertHead>
            <AlertBody>
              <AlertIcon><Info size={15} strokeWidth={2.4} /></AlertIcon>
              钢筋输入格式错误:间距100/200超出范围
            </AlertBody>
            <AlertFoot><AlertBtn>确定</AlertBtn></AlertFoot>
          </Alert>
        </Canvas>
        <ToolRow items={snapTools} h={22} pl={6} bg="#f4f4f4">
          <Tool $w={6}>|</Tool>
          <Tool $w={40}>不偏移<ToolCaret /></Tool>
          <Tool $w={22}>X=</Tool>
          <NumField>0</NumField>
          <Tool $w={36}>mm Y=</Tool>
          <NumField>0</NumField>
          <Tool $w={54}>mm</Tool>
          <NumField>0</NumField>
        </ToolRow>
        <ToolRow items={gridTools} h={22} pl={11} bg="#fff" />
        <GridWrap>
          <BeamGrid>
            <colgroup>
              {beamCols.map((w, i) => <col key={i} width={w} />)}
            </colgroup>
            <thead>
              <tr>
                <GridHead rowSpan={2} />
                <GridHead rowSpan={2}>跨号</GridHead>
                <GridHead colSpan={3}>上部钢筋</GridHead>
                <GridHead colSpan={2}>下部钢筋</GridHead>
                <GridHead colSpan={3}>侧面钢筋</GridHead>
                <GridHead $hot rowSpan={2}>箍筋</GridHead>
              </tr>
              <tr>
                <GridHead>左支座钢筋</GridHead>
                <GridHead>跨中钢筋</GridHead>
                <GridHead>右支座钢筋</GridHead>
                <GridHead>下通长筋</GridHead>
                <GridHead>下部钢筋</GridHead>
                <GridHead>侧面通长筋</GridHead>
                <GridHead>侧面原位标注筋</GridHead>
                <GridHead>拉筋</GridHead>
              </tr>
            </thead>
            <tbody>
              {beamRows.map((row) => (
                <tr key={row[0]}>
                  {row.map((c, i) => (
                    <GridCell key={i} $num={i === 0} $on={row[0] === 4} $edit={row[0] === 4 && i === 10}>{c}</GridCell>
                  ))}
                </tr>
              ))}
            </tbody>
          </BeamGrid>
        </GridWrap>
      </Shot>
      <Reactions>
        <Reaction $color="#e0617f">
          <Bubble $bg="#ffd3dc"><ThumbsUp size={19} strokeWidth={1.2} /><BubbleCount>0</BubbleCount></Bubble>
          <ReactionLabel>问得好</ReactionLabel>
        </Reaction>
        <Reaction $color="#d8a43c">
          <Bubble $bg="#ffeecb"><Star size={19} strokeWidth={1.1} /><BubbleCount>0</BubbleCount></Bubble>
          <ReactionLabel>我收藏</ReactionLabel>
        </Reaction>
        <Reaction $color="#4a9ada">
          <Bubble $bg="#d4efff"><IconShare /><BubbleCount>0</BubbleCount></Bubble>
          <ReactionLabel>我分享</ReactionLabel>
        </Reaction>
        <Reaction $color="#5cb068">
          <Bubble $bg="#def7df" $pt={15}><TriangleAlert size={30} strokeWidth={1.2} /></Bubble>
          <ReactionLabel>我举报</ReactionLabel>
        </Reaction>
      </Reactions>
    </Browser>

    <RebarWindow>
      <RebarTitle>箍筋图</RebarTitle>
      <RebarRed />
      <RebarLine $top={240} $color="#d01010" />
      <RebarLine $top={251} $color="#fff" />
    </RebarWindow>

    <Dialog>
      <DialogTitle>
        钢筋输入助手—梁箍筋
        <CloseBtn><X size={15} strokeWidth={2.5} /></CloseBtn>
      </DialogTitle>
      <Formula>C8@100/200(4)</Formula>
      <ColLabels>
        <ColLabel $w={267}>1.输入格式</ColLabel>
        <ColLabel $w={100}>2.输入说明</ColLabel>
      </ColLabels>
      <DialogCols>
        <FormatList>
          {formats.map((f, i) => (
            <FormatItem key={f} $on={i === formats.length - 1}>{f}</FormatItem>
          ))}
          <HScroll><ScrollBtn>‹</ScrollBtn><ScrollThumb /><ScrollBtn>›</ScrollBtn></HScroll>
        </FormatList>
        <HelpBox><HelpText>此种输入格式主要用于处理同一跨梁内不同范围存在不同箍筋信息的设计方式。</HelpText></HelpBox>
      </DialogCols>
      <DialogBtns>
        <DialogBtn $primary>确定</DialogBtn>
        <DialogBtn>取消</DialogBtn>
      </DialogBtns>
    </Dialog>

    <Scribble width="1418" height="706" viewBox="0 0 1418 706" fill="none" stroke="#df0a14" strokeWidth="3">
      <ellipse cx="629" cy="418" rx="149" ry="30" transform="rotate(-1 629 418)" />
      <ellipse cx="372" cy="516" rx="132" ry="33" transform="rotate(1 372 516)" />
      <ellipse cx="1090" cy="311" rx="127" ry="43" transform="rotate(2 1090 311)" />
      <path d="M1179 589L1127 345" />
      <path d="M1123 325l9.5 24-15 3z" fill="#df0a14" stroke="none" />
    </Scribble>

    <SideDock>
      <DockBtn $gray><DockBar /><DockChevron size={30} strokeWidth={1.6} /></DockBtn>
      <DockBtn>意见<br />反馈</DockBtn>
      <DockBtn>关注<br />我们</DockBtn>
      <DockBtn>Q Q<br />咨询</DockBtn>
    </SideDock>
  </Page>
);

export default App;
